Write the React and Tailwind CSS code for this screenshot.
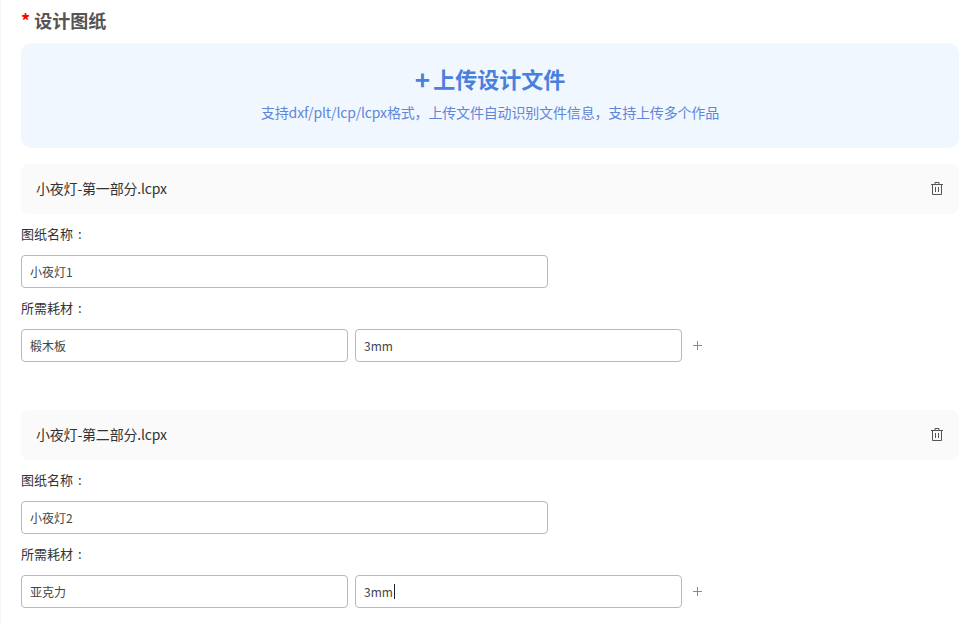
const font = { fontFamily: '"Noto Sans CJK SC", sans-serif' };

function TrashIcon() {
  return (
    <svg className="mb-[2px]" width="12" height="13" viewBox="0 0 12 13" fill="none" stroke="#555" strokeWidth="1">
      <path d="M0 2.5h12" />
      <path d="M4 2.5V.5h4v2" />
      <path d="M1.5 2.5v10h9v-10" />
      <path d="M4.5 5v5M7.5 5v5" />
    </svg>
  );
}

function PlusIcon() {
  return (
    <svg width="9" height="9" viewBox="0 0 9 9" fill="none" stroke="#8f8a84" strokeWidth="1">
      <path d="M4.5 0v9M0 4.5h9" />
    </svg>
  );
}

function Field({ value, width, caret }) {
  return (
    <div className={`${width} h-[33px] flex items-center px-[8px] border border-[#b9b9b9] rounded-[4px] bg-white text-[12px] text-[#444]`}>
      {value}
      {caret && <span className="ml-px w-px h-[15px] bg-[#222]" />}
    </div>
  );
}

function FieldLabel({ text }) {
  return (
    <div className="mt-[12px] h-[17px] flex items-center pb-[2px] text-[13px] text-[#333]">
      {text}
      <span className="ml-[5px]">:</span>
    </div>
  );
}

function DrawingItem({ fileName, name, material, caret }) {
  return (
    <div>
      <div className="h-[50px] flex items-center justify-between pl-[15px] pr-[16px] bg-[#fafafa] rounded-[8px]">
        <span className="pb-[2px] text-[14px] tracking-[-0.2px] text-[#333]">{fileName}</span>
        <TrashIcon />
      </div>
      <FieldLabel text="图纸名称" />
      <div className="mt-[12px]">
        <Field value={name} width="w-[527px]" />
      </div>
      <FieldLabel text="所需耗材" />
      <div className="mt-[12px] flex items-center gap-[7px]">
        <Field value={material} width="w-[327px]" />
        <Field value="3mm" width="w-[327px]" caret={caret} />
        <span className="ml-[4px] flex">
          <PlusIcon />
        </span>
      </div>
    </div>
  );
}

export default function App() {
  return (
    <div className="h-[624px] overflow-hidden bg-white border-l border-[#f3f5fb] pl-[20px] pr-[20px] pt-[7px]" style={font}>
      <div className="h-[26px] flex items-center gap-[4px] text-[18px] font-bold text-[#555]">
        <span className="text-[#f00]">*</span>
        <span>设计图纸</span>
      </div>
      <div className="mt-[10px] h-[105px] flex flex-col items-center pt-[20px] bg-[#f0f7ff] rounded-[10px]">
        <div className="h-[31px] flex items-center gap-[3px] text-[22px] font-bold text-[#4a80dc]">
          <span className="text-[26px]">+</span>
          <span>上传设计文件</span>
        </div>
        <div className="mt-[8px] text-[14px] leading-[20px] tracking-[-0.16px] text-[#5f86d8]">
          支持dxf/plt/lcp/lcpx格式，上传文件自动识别文件信息，支持上传多个作品
        </div>
      </div>
      <div className="mt-[16px] flex flex-col gap-[48px]">
        <DrawingItem fileName="小夜灯-第一部分.lcpx" name="小夜灯1" material="椴木板" />
        <DrawingItem fileName="小夜灯-第二部分.lcpx" name="小夜灯2" material="亚克力" caret />
      </div>
    </div>
  );
}
